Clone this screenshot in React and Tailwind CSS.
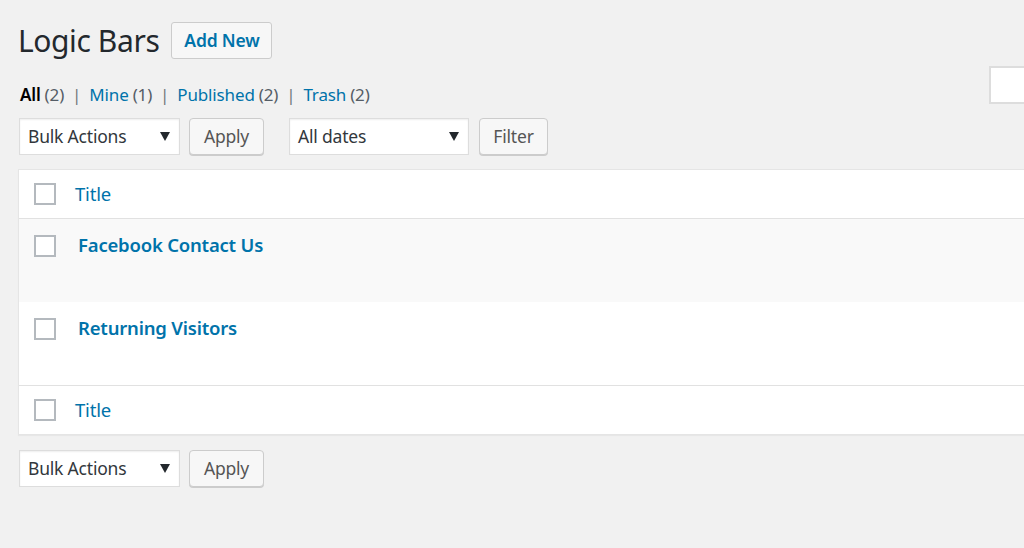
import React from 'react';

const font = { fontFamily: '"Noto Sans", "Open Sans", sans-serif' };

function Arrow() {
  return (
    <svg width="10" height="9" viewBox="0 0 10 9" className="shrink-0">
      <path d="M0 0 L10 0 L5 9 Z" fill="#23282d" />
    </svg>
  );
}

function Select({ label, w }) {
  return (
    <div className={`${w} h-[37px] bg-white border border-[#dddddd] shadow-[inset_0_1px_2px_rgba(0,0,0,0.07)] flex items-center justify-between pl-[8px] pr-[9px]`}>
      <span className="text-[17.5px] tracking-[-0.2px] text-[#32373c]">{label}</span>
      <Arrow />
    </div>
  );
}

function Btn({ label, w }) {
  return (
    <div className={`${w} h-[37px] bg-[#f7f7f7] border border-[#cccccc] rounded-[4px] shadow-[0_1px_0_#cccccc] flex items-center justify-center text-[17.5px] tracking-[-0.2px] text-[#555555]`}>
      {label}
    </div>
  );
}

function Check() {
  return <div className="w-[22px] h-[22px] border-2 border-[#b4b9be] bg-white shrink-0" />;
}

function Controls({ withFilter }) {
  return (
    <div className="flex items-center">
      <Select label="Bulk Actions" w="w-[161px]" />
      <div className="ml-[9px]"><Btn label="Apply" w="w-[75px]" /></div>
      {withFilter && (
        <>
          <div className="ml-[25px]"><Select label="All dates" w="w-[180px]" /></div>
          <div className="ml-[10px]"><Btn label="Filter" w="w-[69px]" /></div>
        </>
      )}
    </div>
  );
}

export default function App() {
  const views = [
    { label: 'Mine', n: 1 },
    { label: 'Published', n: 2 },
    { label: 'Trash', n: 2 },
  ];

  return (
    <div className="w-[1024px] h-[548px] bg-[#f1f1f1] overflow-hidden" style={font}>
      <div className="w-[1100px] pl-[18px]">

        {/* Heading */}
        <div className="flex items-center pt-[22px]">
          <h1 className="text-[30px] leading-[36px] text-[#23282d] tracking-[-0.4px]">Logic Bars</h1>
          <div className="ml-[12px] h-[37px] px-[12px] border border-[#cccccc] rounded-[3px] bg-[#f7f7f7] flex items-center text-[17.5px] tracking-[-0.2px] font-semibold text-[#0073aa]">
            Add New
          </div>
        </div>

        {/* Views + search */}
        <div className="flex items-start mt-[7px] h-[45px]">
          <div className="flex items-center text-[17px] tracking-[-0.15px] mt-[17px] leading-[24px] pl-[2px]">
            <span className="font-semibold text-black">All</span>
            <span className="text-[#555d66] ml-[4px]">(2)</span>
            {views.map((v) => (
              <React.Fragment key={v.label}>
                <span className="text-[#72777c] mx-[8px]">|</span>
                <span className="text-[#0073aa]">{v.label}</span>
                <span className="text-[#555d66] ml-[4px]">({v.n})</span>
              </React.Fragment>
            ))}
          </div>
          <div className="ml-auto w-[111px] h-[38px] bg-white border-2 border-[#dddddd]" />
        </div>

        {/* Top controls */}
        <div className="mt-[7px] pl-[1px]">
          <Controls withFilter />
        </div>

        {/* Table */}
        <div className="mt-[14px] bg-white border border-[#e5e5e5] shadow-[0_1px_1px_rgba(0,0,0,0.04)]">
          <div className="h-[49px] flex items-center border-b border-[#e1e1e1]">
            <div className="pl-[15px]"><Check /></div>
            <span className="ml-[19px] text-[18.5px] tracking-[-0.2px] text-[#0073aa]">Title</span>
          </div>
          {['Facebook Contact Us', 'Returning Visitors'].map((t, i) => (
            <div key={t} className={`h-[83px] flex items-start ${i === 0 ? 'bg-[#f9f9f9]' : 'bg-white'}`}>
              <div className="pl-[15px] pt-[16px]"><Check /></div>
              <span className="ml-[22px] mt-[12px] text-[18.5px] tracking-[-0.2px] font-semibold text-[#0073aa]">{t}</span>
            </div>
          ))}
          <div className="h-[49px] flex items-center border-t border-[#e1e1e1]">
            <div className="pl-[15px]"><Check /></div>
            <span className="ml-[19px] text-[18.5px] tracking-[-0.2px] text-[#0073aa]">Title</span>
          </div>
        </div>

        {/* Bottom controls */}
        <div className="mt-[15px] pl-[1px]">
          <Controls />
        </div>
      </div>
    </div>
  );
}
